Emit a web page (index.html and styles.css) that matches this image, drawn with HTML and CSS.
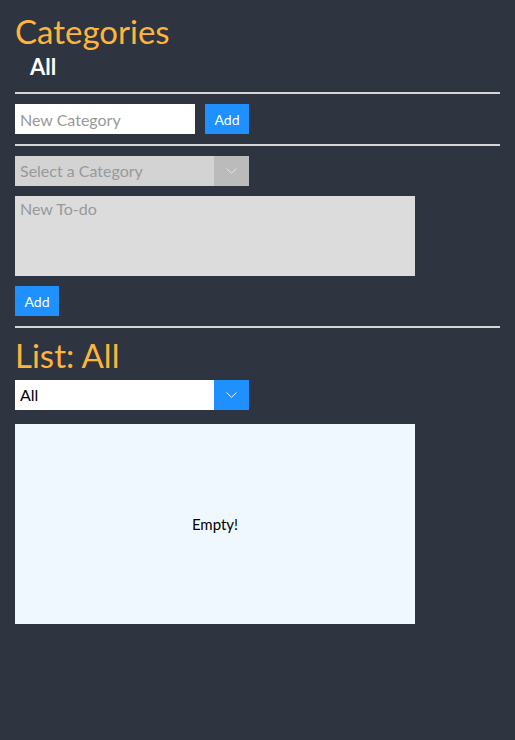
FILE: index.html
```html
<!DOCTYPE html>
<html>
<head>
<meta charset="utf-8">
<link rel="stylesheet" href="styles.css">
</head>
<body>
<div class="page">
  <h1 class="title">Categories</h1>
  <div class="cat-list"><span class="cat">All</span></div>
  <hr class="rule">
  <div class="row">
    <input class="text-input" type="text" placeholder="New Category">
    <button class="btn">Add</button>
  </div>
  <hr class="rule">
  <div class="picker picker-disabled">
    <span class="picker-label">Select a Category</span>
    <span class="picker-arrow"><svg width="11" height="6" viewBox="0 0 11 6"><path d="M0.5 0.5 L5.5 5.3 L10.5 0.5" fill="none" stroke="currentColor" stroke-width="1"/></svg></span>
  </div>
  <textarea class="todo-input" placeholder="New To-do"></textarea>
  <div class="row">
    <button class="btn">Add</button>
  </div>
  <hr class="rule">
  <h1 class="title list-title">List: All</h1>
  <div class="picker list-picker">
    <span class="picker-label picker-value">All</span>
    <span class="picker-arrow picker-arrow-blue"><svg width="11" height="6" viewBox="0 0 11 6"><path d="M0.5 0.5 L5.5 5.3 L10.5 0.5" fill="none" stroke="currentColor" stroke-width="1"/></svg></span>
  </div>
  <div class="empty">Empty!</div>
</div>
</body>
</html>
```

FILE: styles.css
```css
html, body {
  margin: 0;
  padding: 0;
  background: #2e3440;
  font-family: "Lato", "Open Sans", sans-serif;
}
.page {
  padding: 11px 15px;
  height: 740px;
  box-sizing: border-box;
}
.title {
  margin: 0;
  font-size: 33px;
  line-height: 40px;
  font-weight: 400;
  color: #ffb43c;
}
.cat-list {
  padding-left: 15px;
  line-height: 31px;
  font-size: 22px;
  font-weight: 700;
  color: #ffffff;
}
.rule {
  border: 0;
  border-top: 2px solid #d6d6d6;
  margin: 10px 0;
  height: 0;
}
.row {
  display: flex;
  gap: 10px;
}
.text-input {
  width: 180px;
  height: 30px;
  box-sizing: border-box;
  border: 0;
  padding: 0 5px;
  font-family: inherit;
  font-size: 16px;
  background: #fff;
  outline: none;
}
.text-input::placeholder, .todo-input::placeholder { color: #999; }
.btn {
  height: 30px;
  width: 44px;
  border: 0;
  background: #1e90ff;
  color: #fff;
  font-family: inherit;
  font-size: 14px;
  padding: 0;
}
.picker {
  display: flex;
  width: 234px;
  height: 30px;
  background: #fff;
}
.picker-disabled { background: #d3d3d3; margin-bottom: 10px; }
.picker-label {
  flex: 1;
  line-height: 30px;
  padding-left: 5px;
  font-size: 16px;
  color: #999;
}
.picker-value { color: #000; }
.picker-arrow {
  width: 35px;
  display: flex;
  align-items: center;
  justify-content: center;
  background: #bbbbbb;
  color: #e4e4e4;
}
.picker-arrow-blue { background: #1e90ff; color: #e8f2ff; }
.todo-input {
  display: block;
  width: 400px;
  height: 80px;
  box-sizing: border-box;
  border: 0;
  background: #dcdcdc;
  padding: 3px 5px;
  font-family: inherit;
  font-size: 16px;
  resize: none;
  margin: 0 0 10px 0;
  outline: none;
}
.list-title { margin-top: -3px; }
.list-picker { margin-top: 5px; margin-bottom: 14px; }
.empty {
  width: 400px;
  height: 200px;
  background: #f0f8ff;
  display: flex;
  align-items: center;
  justify-content: center;
  font-size: 15px;
  color: #000;
}
```
